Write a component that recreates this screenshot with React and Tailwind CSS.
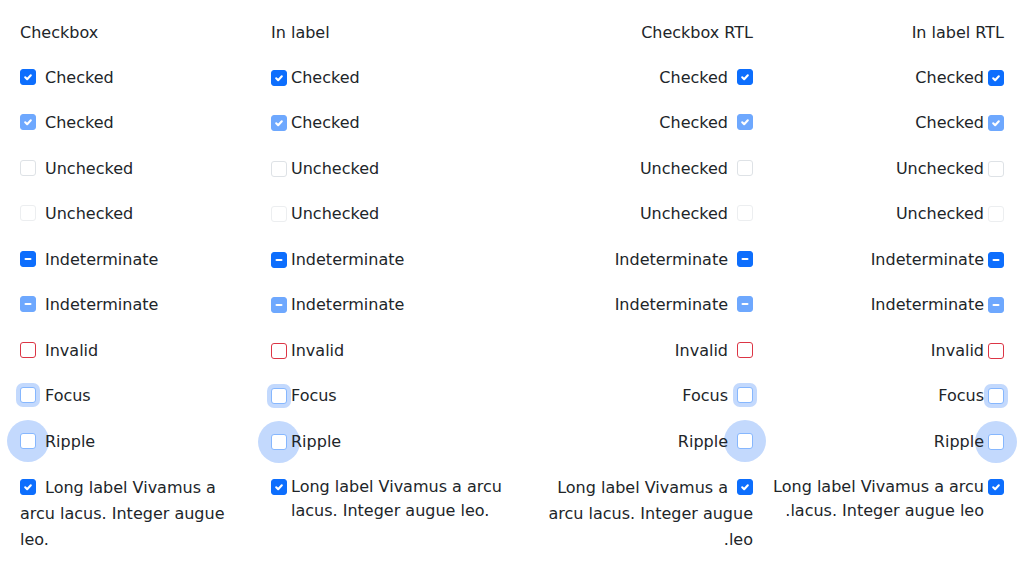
const rows = [
  { label: 'Checked', state: 'checked' },
  { label: 'Checked', state: 'checked-disabled' },
  { label: 'Unchecked', state: 'unchecked' },
  { label: 'Unchecked', state: 'unchecked-disabled' },
  { label: 'Indeterminate', state: 'indeterminate' },
  { label: 'Indeterminate', state: 'indeterminate-disabled' },
  { label: 'Invalid', state: 'invalid' },
  { label: 'Focus', state: 'focus' },
  { label: 'Ripple', state: 'ripple' },
];

const LONG = 'Long label Vivamus a arcu lacus. Integer augue leo.';

function Box({ state }) {
  let cls = 'border border-[#dee2e6] bg-white';
  if (state === 'checked' || state === 'indeterminate') cls = 'bg-[#0d6efd] border border-[#0d6efd]';
  if (state === 'checked-disabled' || state === 'indeterminate-disabled') cls = 'bg-[#6ea8fe] border border-[#6ea8fe]';
  if (state === 'unchecked-disabled') cls = 'border border-[#eceef0] bg-white';
  if (state === 'invalid') cls = 'border border-[#dc3545] bg-white';
  if (state === 'focus') cls = 'border border-[#86b7fe] bg-white shadow-[0_0_0_4px_#c3d9fd]';
  if (state === 'ripple') cls = 'border border-[#86b7fe] bg-white';

  const checked = state.startsWith('checked');
  const indet = state.startsWith('indeterminate');

  return (
    <span className="relative inline-block w-4 h-4 shrink-0 align-[-2px]">
      {state === 'ripple' && (
        <span className="absolute left-1/2 top-1/2 w-[42px] h-[42px] -translate-x-1/2 -translate-y-1/2 rounded-full bg-[#c3d9fd]" />
      )}
      <span className={`absolute inset-0 rounded-[3px] ${cls}`}>
        {checked && (
          <svg viewBox="0 0 20 20" className="w-full h-full">
            <path d="M6 10.5l2.8 2.7L14 7.5" fill="none" stroke="#fff" strokeWidth="3" strokeLinecap="round" strokeLinejoin="round" />
          </svg>
        )}
        {indet && (
          <svg viewBox="0 0 20 20" className="w-full h-full">
            <path d="M6.5 10h7" fill="none" stroke="#fff" strokeWidth="3" strokeLinecap="round" />
          </svg>
        )}
      </span>
    </span>
  );
}

function InlineRow({ state, label, leading = 'leading-6' }) {
  return (
    <div className={leading}>
      <Box state={state} />
      <span className="inline-block w-[9px]" />
      <span className="relative">{label}</span>
    </div>
  );
}

function FlexRow({ state, label }) {
  return (
    <div className="flex items-start gap-1 leading-6">
      <span className="flex h-6 items-center">
        <Box state={state} />
      </span>
      <span className="relative">{label}</span>
    </div>
  );
}

function Column({ title, rtl, inLabel }) {
  const Row = inLabel ? FlexRow : InlineRow;
  return (
    <div dir={rtl ? 'rtl' : 'ltr'} className="flex flex-col gap-[21.5px]">
      <div className="leading-6 -mb-px">{title}</div>
      {rows.map((r, i) => (
        <Row key={i} state={r.state} label={r.label} />
      ))}
      {inLabel ? (
        <FlexRow state="checked" label={LONG} />
      ) : (
        <InlineRow state="checked" label={LONG} leading="leading-[26px]" />
      )}
    </div>
  );
}

export default function App() {
  return (
    <div
      className="w-[1024px] h-[570px] bg-white text-[#212529] text-base overflow-hidden"
      style={{ fontFamily: '"DejaVu Sans", sans-serif' }}
    >
      <div className="grid grid-cols-4 gap-x-5 px-5 pt-[21px]">
        <Column title="Checkbox" />
        <Column title="In label" inLabel />
        <Column title="Checkbox RTL" rtl />
        <Column title="In label RTL" rtl inLabel />
      </div>
    </div>
  );
}
